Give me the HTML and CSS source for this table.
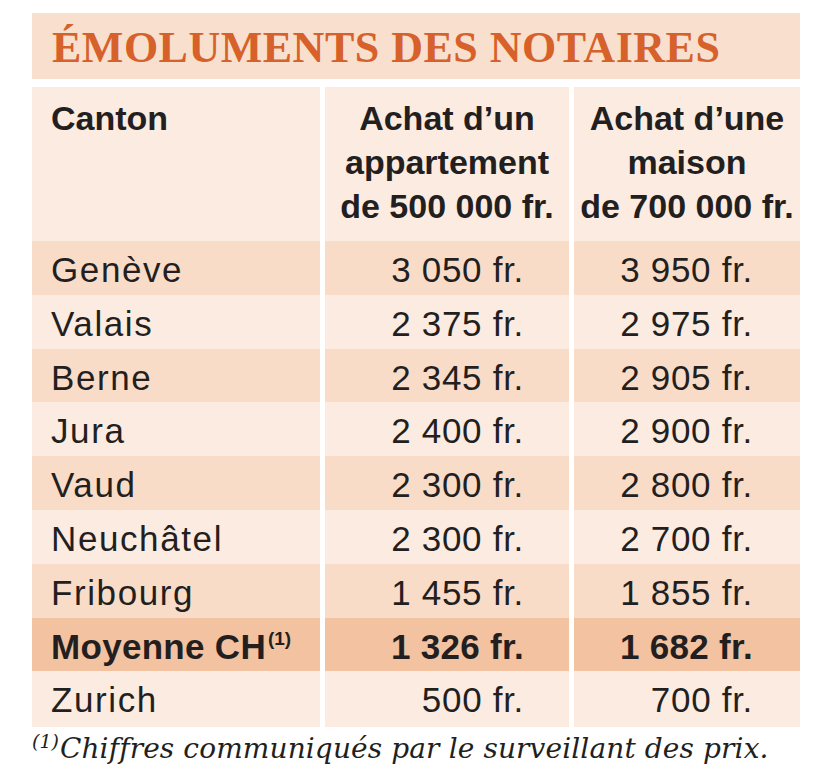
FILE: index.html
```html
<!DOCTYPE html>
<html lang="fr">
<head>
<meta charset="utf-8">
<title>Émoluments des notaires</title>
<link rel="stylesheet" href="styles.css">
</head>
<body>
<div class="card">
  <h1 class="title">ÉMOLUMENTS DES NOTAIRES</h1>
  <div class="table">
    <div class="row head">
      <div class="cell name">Canton</div>
      <div class="cell center">Achat d’un<br>appartement<br>de 500 000 fr.</div>
      <div class="cell center">Achat d’une<br>maison<br>de 700 000 fr.</div>
    </div>
    <div class="row dark">
      <div class="cell name">Genève</div>
      <div class="cell num c2">3 050 fr.</div>
      <div class="cell num c3">3 950 fr.</div>
    </div>
    <div class="row light">
      <div class="cell name">Valais</div>
      <div class="cell num c2">2 375 fr.</div>
      <div class="cell num c3">2 975 fr.</div>
    </div>
    <div class="row dark">
      <div class="cell name">Berne</div>
      <div class="cell num c2">2 345 fr.</div>
      <div class="cell num c3">2 905 fr.</div>
    </div>
    <div class="row light">
      <div class="cell name">Jura</div>
      <div class="cell num c2">2 400 fr.</div>
      <div class="cell num c3">2 900 fr.</div>
    </div>
    <div class="row dark">
      <div class="cell name">Vaud</div>
      <div class="cell num c2">2 300 fr.</div>
      <div class="cell num c3">2 800 fr.</div>
    </div>
    <div class="row light">
      <div class="cell name">Neuchâtel</div>
      <div class="cell num c2">2 300 fr.</div>
      <div class="cell num c3">2 700 fr.</div>
    </div>
    <div class="row dark">
      <div class="cell name">Fribourg</div>
      <div class="cell num c2">1 455 fr.</div>
      <div class="cell num c3">1 855 fr.</div>
    </div>
    <div class="row avg">
      <div class="cell name">Moyenne CH<sup class="ref">(1)</sup></div>
      <div class="cell num c2">1 326 fr.</div>
      <div class="cell num c3">1 682 fr.</div>
    </div>
    <div class="row light">
      <div class="cell name">Zurich</div>
      <div class="cell num c2">500 fr.</div>
      <div class="cell num c3">700 fr.</div>
    </div>
  </div>
  <p class="note"><sup class="note-ref">(1)</sup>Chiffres communiqués par le surveillant des prix.</p>
</div>
</body>
</html>
```

FILE: styles.css
```css
html, body {
  margin: 0;
  padding: 0;
  background: #ffffff;
}

.card {
  width: 768px;
  margin-left: 32px;
  padding-top: 13px;
  color: #231f20;
}

.title {
  margin: 0;
  height: 66px;
  box-sizing: border-box;
  padding-left: 20px;
  padding-top: 10px;
  background: #f9dfcd;
  color: #d6612a;
  font-family: "Liberation Serif", serif;
  font-weight: bold;
  font-size: 44px;
  line-height: 50px;
  letter-spacing: 0.5px;
}

.table {
  margin-top: 8px;
}

.row {
  display: grid;
  grid-template-columns: 288px 244px 226px;
  column-gap: 5px;
  height: 53.8px;
}

.cell {
  box-sizing: border-box;
  font-family: "Liberation Sans", Arial, sans-serif;
}

.row.head {
  height: 154px;
}

.row.head .cell {
  background: #fcebe1;
  font-weight: bold;
  font-size: 34px;
  line-height: 44px;
  padding-top: 9px;
  letter-spacing: 0;
}

.row.head .cell.name {
  padding-left: 19px;
}

.row.head .cell.center {
  text-align: center;
}

.row.dark .cell { background: #f9dcc8; }
.row.light .cell { background: #fcebe0; }
.row.avg .cell { background: #f2c2a1; }

.row.dark .cell,
.row.light .cell,
.row.avg .cell {
  font-size: 35px;
  line-height: 54px;
  padding-top: 2px;
}

.cell.name {
  padding-left: 19px;
  letter-spacing: 1.6px;
}

.cell.num {
  text-align: right;
  letter-spacing: 0.7px;
}

.cell.c2 { padding-right: 45px; }
.cell.c3 { padding-right: 47px; }

.row.avg .cell {
  font-weight: bold;
  letter-spacing: 0.3px;
}

.ref {
  font-size: 19px;
  vertical-align: 0;
  position: relative;
  top: -14px;
  margin-left: 2px;
  letter-spacing: 0;
}

.note {
  margin: 0;
  margin-top: 6px;
  font-family: "DejaVu Serif", serif;
  font-style: italic;
  font-size: 28px;
  line-height: 36px;
  letter-spacing: 0.12px;
  color: #231f20;
}

.note-ref {
  font-size: 19px;
  vertical-align: 0;
  position: relative;
  top: -10px;
  margin-right: 1px;
  letter-spacing: 0;
}
```
